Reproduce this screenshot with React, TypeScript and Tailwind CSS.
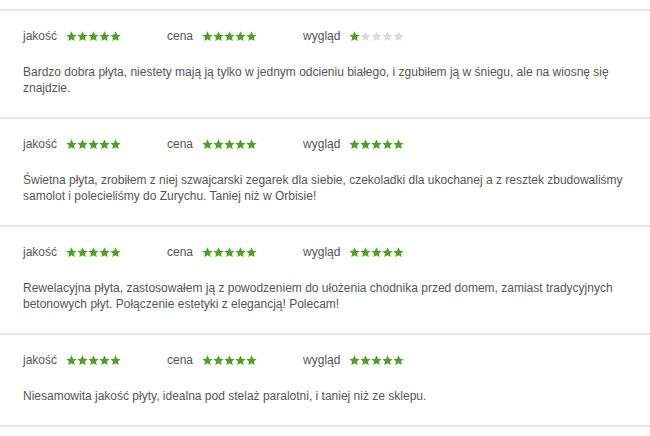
import React, { FC } from "react";

type Review = {
  quality: number;
  price: number;
  look: number;
  text: string;
};

const reviews: Review[] = [
  {
    quality: 5,
    price: 5,
    look: 1,
    text: "Bardzo dobra płyta, niestety mają ją tylko w jednym odcieniu białego, i zgubiłem ją w śniegu, ale na wiosnę się znajdzie.",
  },
  {
    quality: 5,
    price: 5,
    look: 5,
    text: "Świetna płyta, zrobiłem z niej szwajcarski zegarek dla siebie, czekoladki dla ukochanej a z resztek zbudowaliśmy samolot i polecieliśmy do Zurychu. Taniej niż w Orbisie!",
  },
  {
    quality: 5,
    price: 5,
    look: 5,
    text: "Rewelacyjna płyta, zastosowałem ją z powodzeniem do ułożenia chodnika przed domem, zamiast tradycyjnych betonowych płyt. Połączenie estetyki z elegancją! Polecam!",
  },
  {
    quality: 5,
    price: 5,
    look: 5,
    text: "Niesamowita jakość płyty, idealna pod stelaż paralotni, i taniej niż ze sklepu.",
  },
];

const Star: FC<{ on: boolean }> = ({ on }) => (
  <svg viewBox="0 0 20 20" className="h-[11px] w-[11px]">
    <path
      d="M10 0.6l2.8 6 6.6.7-5 4.4 1.5 6.5L10 14.9 4.1 18.2l1.5-6.5-5-4.4 6.6-.7z"
      fill={on ? "#52a02b" : "#dcdcdc"}
    />
  </svg>
);

const Stars: FC<{ value: number }> = ({ value }) => (
  <div className="flex items-center">
    {[1, 2, 3, 4, 5].map((i) => (
      <Star key={i} on={i <= value} />
    ))}
  </div>
);

const Rating: FC<{ label: string; value: number }> = ({ label, value }) => (
  <div className="mr-[46px] flex items-center gap-[9px]">
    <span>{label}</span>
    <Stars value={value} />
  </div>
);

const App: FC = () => {
  return (
    <div
      className="min-h-[436px] bg-white pt-[9px] text-[12px] leading-[16px] text-[#555555]"
      style={{ fontFamily: "'Liberation Sans', Arial, sans-serif" }}
    >
      {reviews.map((r, idx) => (
        <div
          key={idx}
          className="border-t-2 border-[#e6e6e6] px-[23px] pt-[17px] pb-[21px]"
        >
          {/* ratings row */}
          <div className="flex items-center">
            <Rating label="jakość" value={r.quality} />
            <Rating label="cena" value={r.price} />
            <Rating label="wygląd" value={r.look} />
          </div>
          <p className="mt-[20px] max-w-[610px]">{r.text}</p>
        </div>
      ))}
      <div className="border-t-2 border-[#e6e6e6]" />
    </div>
  );
};

export default App;
